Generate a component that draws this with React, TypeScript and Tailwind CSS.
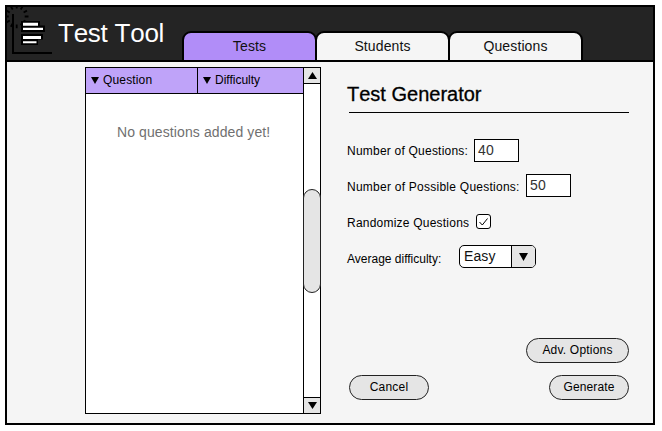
import React from "react";

function Tab({ label, active = false, className = "" }: { label: string; active?: boolean; className?: string }) {
  return (
    <div
      className={`h-[31px] rounded-t-[9px] border-2 border-black text-center text-[14px] leading-[26px] tracking-[0.12px] text-[#111] ${
        active ? "bg-[#b18df8]" : "bg-[#f5f5f5]"
      } ${className}`}
    >
      {label}
    </div>
  );
}

const rays = Array.from({ length: 12 }, (_, i) => {
  const a = (i * Math.PI) / 6;
  const at = (r: number) => `${(9.7 + r * Math.cos(a)).toFixed(2)} ${(9.5 + r * Math.sin(a)).toFixed(2)}`;
  return `M${at(8)}L${at(11.8)}`;
}).join("");

function Logo() {
  return (
    <svg width="52" height="53" viewBox="0 0 52 53" className="shrink-0" fill="none">
      <path d="M6 7V46H45" stroke="#000" strokeWidth="2" />
      <path d={rays} stroke="#000" strokeWidth="1.8" />
      <path d="M14 14H33V18.5H38V25H14ZM14 27H36V32.500H31V38H14Z" fill="#000" />
      <path d="M16 15.700H31V18.700H16ZM16 20.800H36V22.900H16ZM16 29H34V32H16ZM16 34.200H29.500V36.200H16Z" fill="#fff" />
    </svg>
  );
}

function Triangle({ up = false, w = 8, h = 6 }: { up?: boolean; w?: number; h?: number }) {
  return (
    <svg width={w} height={h} viewBox="0 0 10 10" preserveAspectRatio="none" className="shrink-0">
      <path d={up ? "M0 10L5 0L10 10Z" : "M0 0H10L5 10Z"} fill="#000" />
    </svg>
  );
}

function Pill({ label, className = "" }: { label: string; className?: string }) {
  return (
    <button
      className={`block h-[25px] rounded-full border border-[#222] bg-[#e5e5e5] pb-[2px] text-center text-[12px] leading-[20px] ${className}`}
    >
      {label}
    </button>
  );
}

export default function App() {
  return (
    <div className="h-[431px] w-[662px] overflow-hidden bg-white pl-[5px] pt-[5px] font-['Liberation_Sans',Arial,sans-serif] text-black">
      <div className="h-[420px] w-[650px] border-2 border-black bg-[#f5f5f5]">
        <header className="flex h-[55px] border-b-2 border-black bg-[#242424]">
          <Logo />
          <h1 className="-ml-px w-[125px] shrink-0 whitespace-nowrap text-[26px] leading-[52px] tracking-[-0.25px] text-white [font-kerning:none]">
            Test Tool
          </h1>
          <nav className="flex pt-[24px]">
            <Tab label="Tests" active className="-ml-px w-[135px]" />
            <Tab label="Students" className="-ml-[2px] w-[135px]" />
            <Tab label="Questions" className="-ml-[2px] w-[135px]" />
          </nav>
        </header>

        <main className="flex pl-[78px] pt-[5px]">
          <section className="flex h-[347px] w-[236px] border border-black bg-white">
            <div className="w-[217px]">
              <div className="flex h-[26px] border-b border-black bg-[#bfa3f9] text-[12px] leading-[23px]">
                <div className="flex w-[112px] items-center gap-1 border-r border-black pl-[5px]">
                  <Triangle h={7} />
                  <span className="-mt-px tracking-[0.15px]">Question</span>
                </div>
                <div className="flex items-center gap-1 pl-[5px]">
                  <Triangle h={7} />
                  <span className="-mt-px">Difficulty</span>
                </div>
              </div>
              <p className="pl-[31px] pt-[28px] text-[14px] leading-5 tracking-[0.1px] text-[#707070]">No questions added yet!</p>
            </div>
            <div className="flex w-[17px] flex-col border-l border-black">
              <div className="flex h-[16px] items-center justify-center border-b border-black bg-[#e5e5e5]">
                <Triangle up w={9} h={7} />
              </div>
              <div className="flex-1 pt-[105px]">
                <div className="-ml-px h-[104px] w-[18px] rounded-[9px] border border-[#222] bg-[#e5e5e5]" />
              </div>
              <div className="flex h-[16px] items-center justify-center border-t border-black bg-[#e5e5e5]">
                <Triangle w={9} h={7} />
              </div>
            </div>
          </section>

          <section className="ml-[26px] w-[282px] text-[12px]">
            <h2 className="h-[45px] pt-[14px] text-[20px] leading-[26px] [-webkit-text-stroke:0.3px_black] [font-kerning:none]">
              Test Generator
            </h2>
            <div className="ml-[2px] h-px bg-black" />
            <div className="mt-[26px] flex h-[23px] items-center">
              <label className="w-[127px] whitespace-nowrap tracking-[0.22px]">Number of Questions:</label>
              <div className="h-[23px] w-[45px] border border-black bg-white pl-[3px] text-[14px] leading-[20px] tracking-[0.3px] text-[#333]">40</div>
            </div>
            <div className="mt-[12px] flex h-[23px] items-center">
              <label className="w-[179px] whitespace-nowrap pt-[2px] tracking-[0.25px]">Number of Possible Questions:</label>
              <div className="h-[23px] w-[45px] border border-black bg-white pl-[3px] text-[14px] leading-[20px] tracking-[0.3px] text-[#333]">50</div>
            </div>
            <div className="mt-[17px] flex h-[15px] items-center">
              <label className="w-[129px] whitespace-nowrap pt-[2px] tracking-[0.22px]">Randomize Questions</label>
              <div className="flex h-[15px] w-[15px] items-center justify-center rounded-[3px] border border-black bg-white">
                <svg width="9" height="8" viewBox="0 0 9 8" fill="none">
                  <path d="M.5 4L3.300 7L8.500 .5" stroke="#000" />
                </svg>
              </div>
            </div>
            <div className="mt-[16px] flex h-[23px] items-center">
              <label className="w-[112px] pt-[4px]">Average difficulty:</label>
              <div className="flex h-[23px] w-[77px] overflow-hidden rounded-[5px] border border-black bg-white">
                <span className="w-[52px] border-r border-black pl-[4px] text-[14px] leading-[21px] tracking-[0.1px] text-[#111]">Easy</span>
                <span className="flex flex-1 items-center justify-center bg-[#e5e5e5]">
                  <Triangle w={9} h={8} />
                </span>
              </div>
            </div>
            <div className="ml-[2px] mt-[70px] flex flex-col gap-3">
              <Pill label="Adv. Options" className="ml-auto w-[103px] tracking-[0.2px]" />
              <div className="flex justify-between">
                <Pill label="Cancel" className="w-[80px] tracking-[0.2px]" />
                <Pill label="Generate" className="w-[80px] tracking-[0.1px]" />
              </div>
            </div>
          </section>
        </main>
      </div>
    </div>
  );
}
